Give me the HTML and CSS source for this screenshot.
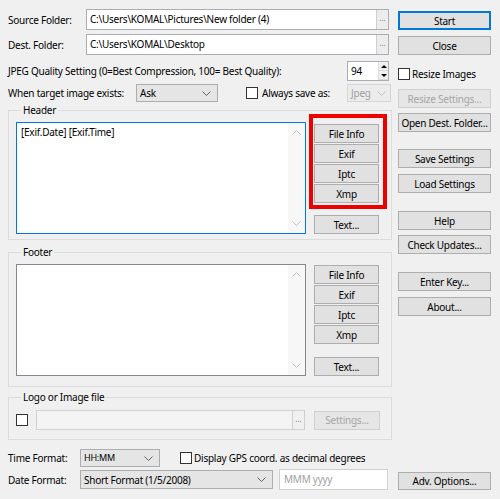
FILE: index.html
```html
<!DOCTYPE html>
<html>
<head>
<meta charset="utf-8">
<link rel="stylesheet" href="styles.css">
</head>
<body>
<div class="window">
  <div class="top">
    <div class="left">
      <div class="row r1">
        <span class="lbl">Source Folder:</span>
        <div class="path"><span class="ptxt">C:\Users\KOMAL\Pictures\New folder (4)</span><span class="dots">...</span></div>
      </div>
      <div class="row r2">
        <span class="lbl">Dest. Folder:</span>
        <div class="path"><span class="ptxt">C:\Users\KOMAL\Desktop</span><span class="dots">...</span></div>
      </div>
      <div class="row r3">
        <span>JPEG Quality Setting (0=Best Compression, 100= Best Quality):</span>
        <div class="spin"><span class="spinval">94</span><span class="arrows"><span class="up"></span><span class="down"></span></span></div>
      </div>
      <div class="row r4">
        <span class="lbl wide">When target image exists:</span>
        <div class="combo ask"><span>Ask</span><svg class="chev" viewBox="0 0 9 5" width="9" height="5"><path d="M0.5 0.5 L4.5 4.5 L8.5 0.5" fill="none" stroke="#606060"/></svg></div>
        <span class="cb always"></span><span class="cbl">Always save as:</span>
        <div class="combo jpeg disabled"><span>Jpeg</span><svg class="chev" viewBox="0 0 9 5" width="9" height="5"><path d="M0.5 0.5 L4.5 4.5 L8.5 0.5" fill="none" stroke="#c4c4c4"/></svg></div>
      </div>

      <fieldset class="group header">
        <legend>Header</legend>
        <div class="gbody">
          <div class="memo focused">
            <span class="memotxt">[Exif.Date] [Exif.Time]</span>
            <div class="vscroll"><svg viewBox="0 0 9 5" width="9" height="5"><path d="M0.5 4.5 L4.5 0.5 L8.5 4.5" fill="none" stroke="#c0c0c0"/></svg><svg viewBox="0 0 9 5" width="9" height="5"><path d="M0.5 0.5 L4.5 4.5 L8.5 0.5" fill="none" stroke="#c0c0c0"/></svg></div>
          </div>
          <div class="btncol hb">
            <button class="btn sm">File Info</button>
            <button class="btn sm">Exif</button>
            <button class="btn sm">Iptc</button>
            <button class="btn sm">Xmp</button>
            <button class="btn sm textbtn">Text...</button>
            <div class="redbox"></div>
          </div>
        </div>
      </fieldset>

      <fieldset class="group footer">
        <legend>Footer</legend>
        <div class="gbody">
          <div class="memo">
            <span class="memotxt"></span>
            <div class="vscroll"><svg viewBox="0 0 9 5" width="9" height="5"><path d="M0.5 4.5 L4.5 0.5 L8.5 4.5" fill="none" stroke="#c0c0c0"/></svg><svg viewBox="0 0 9 5" width="9" height="5"><path d="M0.5 0.5 L4.5 4.5 L8.5 0.5" fill="none" stroke="#c0c0c0"/></svg></div>
          </div>
          <div class="btncol fb">
            <button class="btn sm">File Info</button>
            <button class="btn sm">Exif</button>
            <button class="btn sm">Iptc</button>
            <button class="btn sm">Xmp</button>
            <button class="btn sm textbtn">Text...</button>
          </div>
        </div>
      </fieldset>

      <fieldset class="group logo">
        <legend>Logo or Image file</legend>
        <div class="logorow">
          <span class="cb"></span>
          <div class="logopath"><span class="ptxt"></span><span class="dots">...</span></div>
          <button class="btn sm disabledbtn">Settings...</button>
        </div>
      </fieldset>
    </div>

    <div class="right">
      <button class="btn default">Start</button>
      <button class="btn close">Close</button>
      <div class="resize"><span class="cb"></span><span class="cbl">Resize Images</span></div>
      <button class="btn disabledbtn rs">Resize Settings...</button>
      <button class="btn od">Open Dest. Folder...</button>
      <button class="btn save">Save Settings</button>
      <button class="btn load">Load Settings</button>
      <button class="btn help">Help</button>
      <button class="btn upd">Check Updates...</button>
      <button class="btn key">Enter Key...</button>
      <button class="btn about">About...</button>
    </div>
  </div>

  <div class="row timerow">
    <span class="lbl2">Time Format:</span>
    <div class="combo time"><span>HH:MM</span><svg class="chev" viewBox="0 0 9 5" width="9" height="5"><path d="M0.5 0.5 L4.5 4.5 L8.5 0.5" fill="none" stroke="#606060"/></svg></div>
    <span class="cb gps"></span><span class="cbl">Display GPS coord. as decimal degrees</span>
  </div>
  <div class="row daterow">
    <span class="lbl2">Date Format:</span>
    <div class="combo date"><span>Short Format (1/5/2008)</span><svg class="chev" viewBox="0 0 9 5" width="9" height="5"><path d="M0.5 0.5 L4.5 4.5 L8.5 0.5" fill="none" stroke="#606060"/></svg></div>
    <div class="mmm">MMM yyyy</div>
    <button class="btn adv">Adv. Options...</button>
  </div>
</div>
</body>
</html>
```

FILE: styles.css
```css
* { box-sizing: border-box; }
html, body { margin: 0; padding: 0; background: #f0f0f0; }
body {
  font-family: "Noto Sans", "Open Sans", sans-serif;
  font-size: 10px;
  line-height: 12px;
  letter-spacing: -0.25px;
  color: #000;
  width: 500px;
  height: 499px;
  overflow: hidden;
}
.window { padding: 9px 9px 0 8px; }
.top { display: flex; gap: 6px; }
.left { width: 384px; flex: none; display: flex; flex-direction: column; }
.right { width: 93px; flex: none; display: flex; flex-direction: column; padding-top: 2px; }

.row { display: flex; align-items: center; }
.lbl { width: 78px; flex: none; white-space: nowrap; }
.lbl.wide { width: 128px; }

.path {
  width: 303px; height: 21px; flex: none;
  border: 1px solid #abadb3; background: #fff;
  display: flex; align-items: stretch;
}
.ptxt { flex: 1; padding-left: 3px; white-space: nowrap; overflow: hidden; line-height: 19px; }
.dots {
  width: 12px; flex: none;
  background: #ececec; border-left: 1px solid #cfcfcf;
  color: #777; font-size: 8px; line-height: 16px; text-align: center; letter-spacing: 0;
}
.r2 { margin-top: 4px; }
.r3 { margin-top: 6px; height: 20px; }
.spin {
  margin-left: auto; margin-right: 3px;
  width: 42px; height: 20px;
  border: 1px solid #abadb3; background: #fff;
  display: flex;
}
.spinval { flex: 1; padding-left: 3px; line-height: 18px; }
.arrows { width: 10px; display: flex; flex-direction: column; border-left: 1px solid #dcdcdc; }
.arrows span { flex: 1; background: #f0f0f0; position: relative; border-bottom: 1px solid #dcdcdc; }
.arrows .up::after, .arrows .down::after {
  content: ""; position: absolute; left: 2px; width: 0; height: 0;
  border-left: 3px solid transparent; border-right: 3px solid transparent;
}
.arrows .up::after { top: 3px; border-bottom: 3px solid #000; }
.arrows .down::after { top: 3px; border-top: 3px solid #000; }

.r4 { margin-top: 3px; height: 18px; }
.combo {
  height: 18px; flex: none;
  border: 1px solid #adadad; background: #e5e5e5;
  display: flex; align-items: center; justify-content: space-between;
  padding: 0 6px 0 3px; white-space: nowrap;
}
.combo.ask { width: 82px; }
.combo.disabled { background: #ececec; border-color: #d5d5d5; color: #a0a0a0; }
.combo.jpeg { width: 44px; margin-left: auto; margin-right: 1px; padding-right: 4px; }
.chev { flex: none; }

.cb {
  width: 12px; height: 12px; flex: none;
  border: 1px solid #333; background: #fff;
}
.cb.always { margin-left: 28px; }
.cbl { margin-left: 4px; white-space: nowrap; }

.group {
  border: 1px solid #dcdcdc;
  margin: 0; min-width: 0;
  padding: 5px 7px 5px 7px;
}
.group legend { padding: 0 2px; margin-left: 5px; line-height: 14px; }
.header { margin-top: 1px; padding-bottom: 5px; }
.footer { margin-top: 5px; padding-top: 5px; padding-bottom: 10px; }
.logo { margin-top: 3px; padding-top: 6px; padding-bottom: 9px; }

.gbody { display: flex; gap: 8px; }
.memo {
  width: 290px; height: 112px; flex: none;
  border: 1px solid #828790; background: #fff;
  display: flex;
}
.memo.focused { border-color: #0078d7; }
.memotxt { flex: 1; padding: 3px 4px; }
.vscroll {
  width: 17px; flex: none; background: #f7f7f7;
  display: flex; flex-direction: column; justify-content: space-between; align-items: center;
  padding: 7px 0 7px;
}
.btncol {
  width: 65px; flex: none; display: flex; flex-direction: column; gap: 1px;
  position: relative;
}
.hb { padding-top: 2px; }
.fb { padding-top: 1px; }
.textbtn { margin-top: auto; }

.btn {
  font: inherit; color: #000; letter-spacing: inherit;
  height: 19px; padding: 0; flex: none;
  border: 1px solid #adadad; background: #e1e1e1;
  white-space: nowrap; overflow: hidden;
}
.btn.default { border: 2px solid #0078d7; }
.btn.disabledbtn { background: #e6e6e6; border-color: #d0d0d0; color: #a5a5a5; }

.redbox {
  position: absolute; left: -5px; top: -8px;
  width: 78px; height: 95px;
  border: 4px solid #ee0000;
  pointer-events: none;
}

.logorow { display: flex; align-items: center; height: 20px; }
.logorow .cb { margin-right: 8px; }
.logopath {
  width: 269px; height: 20px; flex: none;
  border: 1px solid #d0d0d0; background: #f4f4f4;
  display: flex;
}
.logopath .dots { background: #f0f0f0; }
.logorow .btn { width: 66px; margin-left: 9px; }

.close { margin-top: 6px; }
.resize { display: flex; align-items: center; height: 13px; margin-top: 12px; }
.resize .cbl { margin-left: 2px; }
.rs { margin-top: 9px; }
.od { margin-top: 5px; }
.save { margin-top: 17px; }
.load { margin-top: 6px; }
.help { margin-top: 18px; }
.upd { margin-top: 5px; }
.key { margin-top: 18px; }
.about { margin-top: 6px; }

.lbl2 { width: 72px; flex: none; }
.timerow { margin-top: 9px; height: 18px; }
.combo.time { width: 80px; font-size: 9px; }
.cb.gps { margin-left: 20px; }
.cb.gps + .cbl { margin-left: 2px; }
.daterow { margin-top: 2px; height: 21px; }
.combo.date { width: 193px; height: 19px; }
.mmm {
  width: 109px; height: 21px; margin-left: 6px; flex: none;
  border: 1px solid #d0d0d0; background: #fff; color: #a0a0a0;
  padding-left: 4px; line-height: 19px;
}
.adv { width: 93px; margin-left: 10px; margin-top: 3px; height: 18px; }
```
